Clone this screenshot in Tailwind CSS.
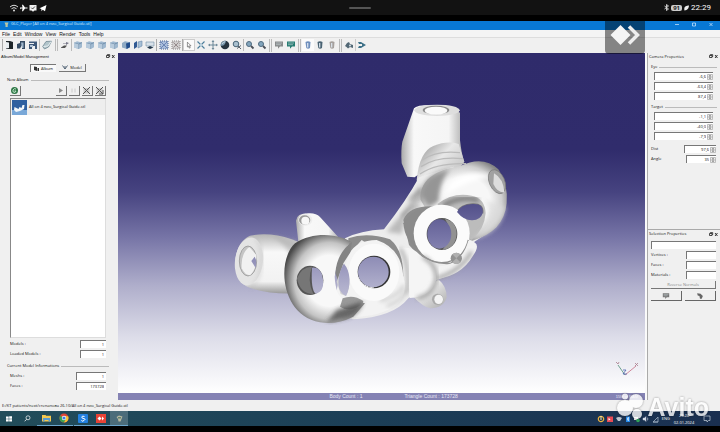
<!DOCTYPE html>
<html lang="en">
<head>
    <meta charset="UTF-8">
    <meta name="viewport" content="width=device-width, initial-scale=1.0">
    <title>GLC_Player [All on 4 нио_Surgical Guide.stl]</title>
    <script src="https://cdn.jsdelivr.net/npm/@tailwindcss/browser@4"></script>
</head>
<body class="bg-black h-screen flex flex-col overflow-hidden font-['Open_Sans',sans-serif] text-[4px] leading-[6px] text-[#111]">
    <!-- Shared icons -->
    <svg class="hidden">
        <symbol id="cube" viewBox="0 0 10 10"><path d="M1 3 4 1.300 9 2.500v4.700L6 9 1 7.500z" fill="#9fb8cf"/><path d="M1 3l4.500 1.200L9 2.500M5.500 4.200V9" stroke="#5b7c9c" stroke-width=".7" fill="none"/><path d="M1 3l4.500 1.200V9L1 7.500z" fill="#b8cbdc"/></symbol>
        <symbol id="lens" viewBox="0 0 10 10"><circle cx="4" cy="4" r="2.500" fill="#83a5bd" stroke="#506b80"/><path d="M6 6l2.500 2.500" stroke="#4c5058" stroke-width="1.800"/></symbol>
        <symbol id="screen" viewBox="0 0 10 10"><path d="M1 1.500h8v5H6L4 8.800V6.500H1z" fill="currentColor"/><path d="M2 3h6M2 4.700h5" stroke="#c9d5d8" stroke-width=".6"/></symbol>
        <symbol id="cup" viewBox="0 0 10 10"><path d="M2.500 2Q5 .5 7.500 2L7 8Q5 9.500 3.300 8z" fill="currentColor"/><path d="M4.700 3v4.500" stroke="#dde7f2" stroke-width="1.200"/></symbol>
        <symbol id="win" viewBox="0 0 10 5"><path d="M1.500 1.500h2.500v2H1.500zM2.300 1.300V.6h2.400v2H4" fill="none" stroke="#222" stroke-width=".8"/><path d="M7 1l2.500 3M9.500 1 7 4" stroke="#222" stroke-width=".9"/></symbol>
        <symbol id="spin" viewBox="0 0 6 6"><path d="M.5.500h5v5h-5zM.5 3h5" fill="#eee" stroke="#888" stroke-width=".5"/><path d="M3 1l1 1.300H2zM3 5l1-1.300H2z" fill="#333"/></symbol>
    </svg>

    <!-- Phone status bar -->
    <header class="relative h-[15px] shrink-0 bg-[#121212] text-white flex items-center px-[9px]">
        <svg class="w-[38px] h-[8px]" viewBox="0 0 38 8">
            <path d="M1 3Q5-.500 9 3M2.500 4.700Q5 2.500 7.500 4.700" fill="none" stroke="#ddd"/><circle cx="5" cy="6.500" r="1" fill="#ddd"/>
            <path d="M11 3.500h2.500L13 .8h1l2 2.700h2.500v1H16L14 7.200h-1l.5-2.700H11.700L11 5.500z" fill="#fff"/>
            <path d="M20.500 1h7v5.500h-2l-1.500 1.200-1.500-1.200h-2z" fill="#eee"/><path d="M22.300 3.700l1.300 1.300 2.300-2.500" fill="none" stroke="#222" stroke-width=".8"/>
            <path d="M30.500 4.200 37.500 1 36 7.200l-2.300-1.400-1.200 1.400-.2-2.200z" fill="#fff"/>
        </svg>
        <span class="absolute left-1/2 -translate-x-1/2 top-[7px] w-[22px] h-[2px] rounded-full bg-[#555]"></span>
        <div class="ml-auto flex items-center gap-[2px] leading-[8px]">
            <svg class="w-[5px] h-[7px]" viewBox="0 0 5 7"><path d="M.5 2l4 3-2 1.500v-6l2 1.500-4 3" fill="none" stroke="#ddd" stroke-width=".9"/></svg>
            <span class="w-[11px] h-[6px] leading-[6px] rounded-[2px] bg-[#ccc] text-[#222] text-[6px] font-bold text-center">91</span>
            <svg class="w-[5px] h-[6px]" viewBox="0 0 5 6"><path d="M.5 5.500C-.5 1.500 2 .8 5 .6 4.500 4 3.500 5 .5 5.500z" fill="#eee"/></svg>
            <span class="text-[8px] font-['Roboto']">22:29</span>
        </div>
    </header>

    <div class="relative flex-1 min-h-0 mt-[6px] flex flex-col bg-[#f0f0f0]">
        <!-- Title bar -->
        <div class="h-[9px] shrink-0 bg-[#0878d4] flex items-center text-[#d5ebfb] pb-[3px]">
            <svg class="w-[5px] h-[5px] ml-[4px] mr-[2px]" viewBox="0 0 5 5"><path d="M.5.500h4L3.700 3v2H1.500V3z" fill="#b8c7a5"/></svg>
            <h1>GLC_Player [All on 4 нио_Surgical Guide.stl]</h1>
            <div class="ml-auto flex gap-[11px] mr-[6px]">
                <button aria-label="Minimize" class="w-[6px] h-[5px]"><svg viewBox="0 0 6 5"><path d="M1 2.500h4" stroke="#d7ecff" stroke-width=".7"/></svg></button>
                <button aria-label="Maximize" class="w-[6px] h-[5px]"><svg viewBox="0 0 6 5"><path d="M1.500 1h3v3h-3z" fill="none" stroke="#d7ecff" stroke-width=".7"/></svg></button>
                <button aria-label="Close" class="w-[6px] h-[5px]"><svg viewBox="0 0 6 5"><path d="M1.500 1l3 3m0-3-3 3" stroke="#d7ecff" stroke-width=".7"/></svg></button>
            </div>
        </div>

        <!-- Menu -->
        <nav class="h-[7px] shrink-0 bg-[#f4f4f4] flex items-center gap-[3px] pl-[2px] text-[5px] font-['Liberation_Sans']">
            <button>File</button><button>Edit</button><button>Window</button><button>View</button><button>Render</button><button>Tools</button><button>Help</button>
        </nav>

        <!-- Toolbar -->
        <div class="h-[16px] shrink-0 border-t border-[#ddd] flex items-center pl-[2px] pb-px *:shrink-0 [&_button]:w-[12px] [&_button]:h-[12px] [&_button]:p-px [&_svg]:w-[10px] [&_svg]:h-[10px]">
            <div class="flex border-l border-[#aaa]">
                <button aria-label="New"><svg viewBox="0 0 10 10"><path d="M2 1h4l3 1v7H2z" fill="#1f2529"/><path d="M2 2l3 .5V8L2 8.500z" fill="#e9eef2"/></svg></button>
                <button aria-label="Open"><svg viewBox="0 0 10 10"><path d="M1 8.500V4l3-1V1h5v8H6V5L4 8.500z" fill="#364b63"/><path d="M5 2.500h2.500V8H6z" fill="#9eb5cb"/></svg></button>
                <button aria-label="Save"><svg viewBox="0 0 10 10"><path d="M1 1.500h8V9H7V6H4v3H1V4h5V3H1z" fill="#3f597a"/><path d="M2 5h3v2H2z" fill="#b6c8da"/></svg></button>
            </div>
            <div class="flex border-l border-[#bbb] pl-px">
                <button aria-label="Close album"><svg viewBox="0 0 10 10"><path d="M.7 6.500 4 1.500l5.500-.3L6.500 7 2.500 9z" fill="#b2c5cb" stroke="#66808b" stroke-width=".7"/><path d="M1.500 6.500 6 6l3-4.500" stroke="#e6eef0" fill="none"/></svg></button>
            </div>
            <div class="flex border-x border-[#bbb] ml-[2px] pl-px h-[12px] w-[3px]"></div>
            <div class="flex pl-px"><button aria-label="Reframe"><svg viewBox="0 0 10 10"><path d="M1 7.500l3-2h3L5 8H1z" fill="#555"/><path d="M3 3.500h3V2l3 1-3 2V4H3" fill="#778"/></svg></button></div>
            <div class="flex border-l border-[#bbb]">
                <button aria-label="Isometric"><svg><use href="#cube"/></svg></button><button aria-label="Front"><svg><use href="#cube"/></svg></button><button aria-label="Right"><svg><use href="#cube"/></svg></button><button aria-label="Top"><svg><use href="#cube"/></svg></button>
                <button aria-label="Left"><svg viewBox="0 0 10 10"><path d="M1 3 4 1.300l5 1v5L6 9 1 7.500z" fill="#90abc4"/><path d="M5 3.500 9 2.300v5L5.500 9z" fill="#234e8c"/></svg></button>
                <button aria-label="Back"><svg viewBox="0 0 10 10"><path d="M1 3l3-2v6L1 9z" fill="#315a93"/><path d="M5 2l4-1v5L5 8z" fill="#a6bfd6" stroke="#6888a8" stroke-width=".6"/></svg></button>
                <button aria-label="Bottom"><svg viewBox="0 0 10 10"><path d="M1 2h8v4H1z" fill="#d8e1e9" stroke="#7590a8" stroke-width=".6"/><path d="M2 7.500 5 6l3.500 1.500L5 9z" fill="#24394d"/></svg></button>
            </div>
            <div class="flex border-x border-[#aaa] pl-px">
                <button aria-label="Select all"><svg viewBox="0 0 10 10"><path d="M1 1h8v8H1z" fill="#a9bddb" stroke="#4a6292" stroke-width="1" stroke-dasharray="1 1"/><path d="M2.500 2.500l5 5m0-5-5 5" stroke="#345291" stroke-dasharray="1 .6"/></svg></button>
                <button aria-label="Unselect all"><svg viewBox="0 0 10 10"><path d="M1 1h8v8H1z" fill="#d0cdcd" stroke="#8d8787" stroke-width="1" stroke-dasharray="1 1"/><path d="M2.500 2.500l5 5m0-5-5 5" stroke="#958b8b"/></svg></button>
            </div>
            <div class="flex border-r border-[#bbb]">
                <button aria-label="Select" class="bg-[#fbfbfb] border border-[#ccc] flex items-center justify-center"><svg viewBox="0 0 10 10"><path d="M3 1.500l4.500 4.500H5.500l1 2.500-1.200.4-1-2.500L3 7.500z" fill="#fff" stroke="#444" stroke-width=".7"/></svg></button>
                <button aria-label="Zoom extents"><svg viewBox="0 0 10 10"><path d="M1.500 1.500l7 7m0-7-7 7" stroke="#4b7d9b" stroke-width="1.100"/><path d="M4 4h2v2H4z" fill="#b8d1df"/></svg></button>
                <button aria-label="Pan"><svg viewBox="0 0 10 10"><path d="M5 .7v8.600M.7 5h8.600M4 2l1-1.300L6 2M4 8l1 1.300L6 8M2 4 .7 5 2 6M8 4l1.300 1L8 6" fill="none" stroke="#617f91" stroke-width=".9"/></svg></button>
                <button aria-label="Orbit"><svg viewBox="0 0 10 10"><circle cx="5" cy="5" r="4.300" fill="#26343f"/><path d="M5 .7a4.300 4.300 0 0 0-4.200 5Q5 6.500 6 1z" fill="#7998ad"/><path d="M2 4q1-2 3-2.200" stroke="#cad8e0" fill="none"/></svg></button>
                <button aria-label="Zoom"><svg viewBox="0 0 10 10"><circle cx="4" cy="4" r="2.800" fill="#a9c0cf" stroke="#496679"/><path d="M6 6l3 3M5 8.500l4-3" stroke="#56616b"/></svg></button>
            </div>
            <div class="flex"><button aria-label="Zoom in"><svg><use href="#lens"/></svg></button><button aria-label="Zoom out"><svg><use href="#lens"/></svg></button></div>
            <div class="w-[3px] h-[13px] border-x border-[#bbb] mx-px"></div>
            <div class="flex"><button aria-label="Hide" class="text-[#87898a]"><svg><use href="#screen"/></svg></button><button aria-label="Show" class="text-[#257c72]"><svg><use href="#screen"/></svg></button></div>
            <div class="w-[3px] h-[13px] border-x border-[#bbb] mx-px"></div>
            <div class="flex"><button aria-label="Shaded" class="bg-[#fbfbfb] text-[#6f8fbd]"><svg><use href="#cup"/></svg></button><button aria-label="Wireframe" class="text-[#4a6373]"><svg><use href="#cup"/></svg></button><button aria-label="Points" class="text-[#a5a09d]"><svg><use href="#cup"/></svg></button></div>
            <div class="w-[3px] h-[13px] border-x border-[#bbb] mx-px"></div>
            <div class="flex"><button aria-label="Snapshot"><svg viewBox="0 0 10 10"><path d="M1 6l2-3 2-1 1 2 3 1v3L6 7 4 8.500 2.500 7z" fill="#536875"/><circle cx="6" cy="5.500" r="1" fill="#d4e0e6"/></svg></button></div>
            <div class="flex border-l border-[#ccc]"><button aria-label="Section"><svg viewBox="0 0 10 10"><path d="M1 2h3l5 3-5 3H1l1-2h3V4H2z" fill="#3d7188"/></svg></button></div>
        </div>

        <div class="flex-1 min-h-0 flex">
            <!-- Album panel -->
            <aside class="w-[118px] shrink-0 flex flex-col pb-[6px]">
                <div class="flex justify-between items-center h-[7px] pr-[3px] pl-px"><h2 class="font-['Liberation_Sans']">Album/Model Management</h2><svg class="w-[10px] h-[5px]"><use href="#win"/></svg></div>
                <div class="flex gap-[3px] pl-[30px] pt-[4px]">
                    <button class="w-[26px] h-[8px] flex items-center justify-center gap-[2px] bg-[#f9f9f9] border-t border-l border-[#777]"><svg class="w-[5px] h-[5px]" viewBox="0 0 5 5"><path d="M0 .5l3 .5v4L0 4zM3.500 2H5v3H3.500z" fill="#333"/></svg>Album</button>
                    <button class="w-[27px] h-[8px] flex items-center justify-center gap-[2px] border-b border-r border-[#777]"><svg class="w-[6px] h-[5px]" viewBox="0 0 6 5"><path d="M.5.500 3 4l2.500-3.500M3 4V1" stroke="#567" fill="none"/></svg>Model</button>
                </div>
                <div class="flex items-center gap-[2px] pl-[7px] pr-[9px] pt-[5px]"><h3>New Album</h3><span class="flex-1 h-px bg-[#bbb]"></span></div>
                <div class="flex gap-[2px] pl-[10px] pr-[12px] pt-[3px] pb-[2px] [&_button]:w-[11px] [&_button]:h-[10px] [&_button]:border-b [&_button]:border-r [&_button]:border-[#777] [&_svg]:w-[9px] [&_svg]:h-[9px]">
                    <button aria-label="Add" class="mr-auto"><svg viewBox="0 0 9 9"><circle cx="4.500" cy="4.500" r="3.500" fill="#2f7646"/><path d="M6 3Q4 1.800 3 4t2 2.500L6 5H4.500" fill="none" stroke="#c8eed2" stroke-width=".9"/></svg></button>
                    <button aria-label="Play"><svg viewBox="0 0 9 9"><path d="M3 2l4 2.500L3 7z" fill="#8a8a8a"/></svg></button>
                    <button aria-label="Stop"><svg viewBox="0 0 9 9"><path d="M3 2.500v4m3-4v4" stroke="#ccc"/></svg></button>
                    <button aria-label="Remove"><svg viewBox="0 0 9 9"><path d="M1.500 2h6v5.500h-6z" fill="#ccc"/><path d="M1 1l7 7m0-7L1 8" stroke="#555"/></svg></button>
                    <button aria-label="Clear"><svg viewBox="0 0 9 9"><path d="M1.500 2h6v5.500h-6z" fill="#ccc"/><path d="M1 1l7 7m0-7L1 8M8 4v4H4" fill="none" stroke="#555"/></svg></button>
                </div>
                <ul class="flex-1 ml-[10px] mr-[12px] bg-white border border-[#888] border-b-[#ddd] border-r-[#ddd]">
                    <li class="flex items-center gap-[2px] bg-[#eee] h-[16px] pl-px">
                        <svg class="w-[15px] h-[15px]" viewBox="0 0 15 15"><path d="M0 0h15v15H0z" fill="#2f5f9f"/><path d="M0 10h15v5H0z" fill="#79a8d8"/><path d="M2 10l.5-3 2 1 2 1 1-2 2 1 1-3h2l-.5 4-4 2-4 1z" fill="#f2f6fa"/></svg>
                        <span class="whitespace-nowrap">All on 4 нио_Surgical Guide.stl</span>
                    </li>
                </ul>
                <div class="pl-[10px] pr-[12px] pt-[2px] flex flex-col gap-[2px]">
                    <div class="flex justify-between items-center"><label for="models">Models :</label><input id="models" value="1" readonly class="w-[26px] h-[8px] bg-white border-t border-l border-[#777] text-right pr-[2px]"></div>
                    <div class="flex justify-between items-center"><label for="loaded">Loaded Models :</label><input id="loaded" value="1" readonly class="w-[26px] h-[8px] bg-white border-t border-l border-[#777] text-right pr-[2px]"></div>
                </div>
                <div class="flex items-center gap-[2px] pl-[7px] pr-[9px] pt-[5px] pb-[3px]"><h3 class="whitespace-nowrap">Current Model Informations</h3><span class="flex-1 h-px bg-[#bbb]"></span></div>
                <div class="pl-[10px] pr-[12px] pb-[4px] flex flex-col gap-[2px]">
                    <div class="flex justify-between items-center"><label for="meshs">Meshs :</label><input id="meshs" value="1" readonly class="w-[30px] h-[8px] bg-white border-t border-l border-[#777] text-right pr-[2px]"></div>
                    <div class="flex justify-between items-center"><label for="faces">Faces :</label><input id="faces" value="173728" readonly class="w-[30px] h-[8px] bg-white border-t border-l border-[#777] text-right pr-[2px]"></div>
                </div>
            </aside>

            <!-- 3D view -->
            <main class="flex-1 min-w-0 flex flex-col bg-[linear-gradient(to_bottom,#2f2b6b_0%,#302c6c_28%,#464380_40%,#7674a6_53%,#afaecb_67%,#dddde9_82%,#ffffff_98%)]">
                <svg class="w-full flex-1 min-h-0" viewBox="0 0 527 340">
                    <defs>
                        <radialGradient id="ball" cx=".5" cy=".5" r=".55"><stop offset=".55" stop-color="#f7f7f7"/><stop offset=".8" stop-color="#d0d0d0"/><stop offset="1" stop-color="#858585"/></radialGradient>
                        <radialGradient id="dark" cx=".56" cy=".52" r=".58"><stop offset=".5" stop-color="#f8f8f8"/><stop offset=".75" stop-color="#c4c4c4"/><stop offset="1" stop-color="#4a4a4a"/></radialGradient>
                        <linearGradient id="tube"><stop offset="0" stop-color="#aaa"/><stop offset=".2" stop-color="#f8f8f8"/><stop offset=".75" stop-color="#f5f5f5"/><stop offset="1" stop-color="#aaa"/></linearGradient>
                        <linearGradient id="neck" x1="0" y1="0" x2="1" y2="1"><stop offset="0" stop-color="#888"/><stop offset=".4" stop-color="#e8e8e8"/><stop offset="1" stop-color="#aaa"/></linearGradient>
                        <linearGradient id="arm" x1="0" y1="0" x2="0" y2="1"><stop offset="0" stop-color="#b5b5b5"/><stop offset=".3" stop-color="#f8f8f8"/><stop offset=".8" stop-color="#f2f2f2"/><stop offset="1" stop-color="#999"/></linearGradient>
                        <filter id="soft"><feGaussianBlur stdDeviation="6"/></filter>
                        <mask id="holes" maskUnits="userSpaceOnUse" x="0" y="0" width="900" height="750">
                            <path d="M0 0h900v750H0z" fill="#fff"/>
                            <ellipse cx="658" cy="432" rx="36" ry="44"/>
                            <ellipse cx="460" cy="546" rx="46" ry="46"/>
                            <path d="M276 533Q305 530 309 568T287 611Q272 600 276 533z"/>
                            <path d="M372 521C393 545 393 590 378 618Q362 610 357 594C353 572 357 543 372 521z"/>
                            <path d="M711 366Q722 344 757 342T788 370Q782 390 757 391T711 366z"/>
                            <path d="M94 513L104 500Q112 512 107 534z"/>
                        </mask>
                    </defs>
                    <g transform="translate(102 37) scale(.33333)">
                        <g mask="url(#holes)">
                            <!-- tower -->
                            <path d="M582 55Q590 43 650 45T720 70L720 150Q724 190 733 216L600 250 584 262 562 260 545 220Q542 180 547 155z" fill="url(#tube)"/>
                            <ellipse cx="651" cy="61" rx="68" ry="17" fill="#dedede"/><ellipse cx="648" cy="60" rx="40" ry="13" fill="#888"/><ellipse cx="648" cy="62" rx="34" ry="12" fill="#fafafa"/>
                            <path d="M590 270Q598 185 640 168T716 162L733 215 700 260 600 310z" fill="url(#neck)"/>
                            <path d="M607 210Q650 180 720 188M603 230Q650 198 728 206M600 252Q650 218 738 221" fill="none" stroke="#bbb" stroke-width="4"/>
                            <!-- left arm -->
                            <path d="M90 437Q150 425 215 448L245 460 220 610Q140 612 85 592C35 570 30 465 90 437z" fill="url(#arm)"/>
                            <path d="M150 435Q210 470 222 520L235 455z" fill="#aaa" filter="url(#soft)" opacity=".6"/>
                            <ellipse cx="87" cy="514" rx="42" ry="72" fill="#e4e4e4" transform="rotate(7 87 514)"/>
                            <path d="M105 443Q139 480 117 560 105 590 90 590" fill="none" stroke="#aaa" stroke-width="3" filter="url(#soft)"/>
                            <ellipse cx="84" cy="513" rx="26" ry="45" fill="#c5c5c5" stroke="#8c8c8c" stroke-width="2"/>
                            <path d="M88 471Q62 490 65 535 75 556 90 556 112 535 109 495z" fill="#f1f1f1"/>
                            <!-- small pegs -->
                            <path d="M228 392Q230 370 265 370 287 368 300 381L358 445 235 455z" fill="url(#tube)"/>
                            <ellipse cx="256" cy="389" rx="21" ry="18" fill="#ededed"/><ellipse cx="254" cy="390" rx="17" ry="14" fill="#999"/><ellipse cx="256" cy="392" rx="12" ry="12" fill="#f7f7f7"/>
                            <path d="M580 620L655 568Q681 590 680 622 670 655 631 655 608 650 580 620z" fill="url(#neck)"/>
                            <ellipse cx="653" cy="628" rx="17" ry="17" fill="#aaa"/><ellipse cx="656" cy="628" rx="13" ry="14" fill="#f4f4f4"/>
                            <!-- arch -->
                            <path d="M597 262Q560 330 492 418 420 422 375 445L340 670 400 688Q520 682 565 625L650 570Q730 545 757 460L830 410 700 230z" fill="#ededed"/>
                            <path d="M600 280Q570 350 500 425L545 432Q560 350 610 330z" fill="#bbb" filter="url(#soft)"/>
                            <path d="M568 330Q590 310 604 300M545 380Q570 350 600 348" fill="none" stroke="#777" stroke-width="5" filter="url(#soft)"/>
                            <!-- right bulb -->
                            <path d="M602 330C595 260 670 235 720 228Q790 195 835 238 865 280 860 340 852 425 757 452L650 410z" fill="url(#ball)"/>
                            <path d="M601 315Q610 250 690 239 660 265 656 335L625 350z" fill="#959595" filter="url(#soft)"/>
                            <path d="M690 280Q750 230 830 265 770 255 675 315z" fill="#fff" filter="url(#soft)"/>
                            <path d="M652 342Q700 305 755 317 795 325 797 370 793 420 755 449L700 420z" fill="#bcbcbc"/>
                            <path d="M670 347Q725 315 775 331" fill="none" stroke="#777" stroke-width="12" filter="url(#soft)"/>
                            <path d="M795 330Q822 370 790 420L760 448Q845 430 858 350z" fill="#ddd" opacity=".7" filter="url(#soft)"/>
                            <path d="M711 366Q722 344 757 342T788 370" fill="none" stroke="#777" stroke-width="4"/>
                            <ellipse cx="831" cy="275" rx="23" ry="38" fill="#a1a1a1" stroke="#777" stroke-width="2" transform="rotate(-24 831 275)"/><path d="M822 250Q850 265 853 307 833 309 820 282z" fill="#ddd"/>
                            <!-- right sleeve -->
                            <path d="M550 390Q565 350 630 349L700 355 745 450Q740 500 680 520 610 520 567 465z" fill="#8d8d8d"/>
                            <path d="M550 400Q580 350 640 350L595 475Q555 455 550 400z" fill="#8b8b8b"/>
                            <ellipse cx="665" cy="430" rx="84" ry="86" fill="#fbfbfb"/>
                            <path d="M588 480Q630 525 692 520 735 495 745 450" fill="none" stroke="#909090" stroke-width="4"/>
                            <ellipse cx="666" cy="432" rx="46" ry="48" fill="#555"/><path d="M675 387Q710 395 710 432 707 475 667 480 705 435 675 387z" fill="#929292"/>
                            <path d="M745 452Q790 455 757 500 725 555 650 568L655 530Q725 525 745 452z" fill="#f2f2f2"/>
                            <path d="M650 565Q720 545 755 485" stroke="#999" stroke-width="9" fill="none" filter="url(#soft)"/>
                            <circle cx="709" cy="505" r="17" fill="#929292"/><path d="M709 505l-12-12a17 17 0 0 1 24 0zM709 505l12 12a17 17 0 0 1-24 0z" fill="#b0b0b0"/>
                            <!-- middle bulge -->
                            <path d="M535 475Q575 465 605 500 650 520 648 570 635 620 570 624L545 580z" fill="#f5f5f5"/>
                            <path d="M608 500Q652 525 648 570 635 618 590 625" fill="none" stroke="#999" stroke-width="9" filter="url(#soft)"/>
                            <path d="M540 475Q570 520 562 610" fill="none" stroke="#aaa" stroke-width="10" filter="url(#soft)"/>
                            <!-- middle sleeve -->
                            <path d="M385 445Q440 425 510 448 550 480 550 560L530 520 425 450 385 495z" fill="#8c8c8c"/>
                            <path d="M387 492Q410 450 470 450 545 475 550 560 565 610 530 645 470 685 380 680L350 600z" fill="#f3f3f3"/>
                            <path d="M480 632Q535 620 552 585M500 648Q545 635 560 600" fill="none" stroke="#aaa" stroke-width="5" filter="url(#soft)"/>
                            <ellipse cx="462" cy="547" rx="76" ry="86" fill="#fafafa"/><ellipse cx="462" cy="546" rx="49" ry="49" fill="#333"/><path d="M413 560Q427 592 462 594" fill="none" stroke="#eee" stroke-width="3"/>
                            <!-- left ball with crescent -->
                            <path d="M391 455Q350 510 344 560 347 615 370 628L435 640 400 680Q350 705 300 697C180 675 170 510 225 460 285 420 370 435 398 460z" fill="url(#dark)"/>
                            <path d="M396 455Q350 490 346 550L357 580 370 520 391 487z" fill="#848484"/>
                            <path d="M370 521C393 545 393 590 378 618L362 612 350 575z" fill="#d2d2d2"/>
                            <path d="M368 625Q400 612 430 633L428 642Q390 670 360 650z" fill="#999"/>
                            <path d="M428 635Q420 675 370 687L320 697 350 660z" fill="#444" filter="url(#soft)" opacity=".75"/>
                            <ellipse cx="270" cy="571" rx="40" ry="44" fill="#555"/><path d="M231 565Q245 530 276 530 260 570 280 612 240 612 231 565z" fill="#767676"/>
                        </g>
                    </g>
                    <g fill="none" stroke-width=".8"><path d="M507 322l-7-10" stroke="#4c8b74"/><path d="M507 322l11-9" stroke="#c56d83"/><path d="M505 317h3l-3 4h4" stroke="#4c62ae"/><path d="M498 309l2 2 1-2M517 310l3 3m0-3-3 3" stroke="#a87c8b"/></g>
                </svg>
                <div class="h-[7px] shrink-0 bg-[#8583b4] text-[#e8e8f5] text-[5px] font-['Liberation_Sans'] grid grid-cols-[2fr_75px_2fr_auto] items-center leading-[7px] pr-[7px]">
                    <span></span><span>Body Count : 1</span><span>Triangle Count : 173728</span><span class="text-[4px]">15M of RAM</span>
                </div>
            </main>

            <!-- Properties -->
            <aside class="w-[75px] shrink-0 border-l-2 border-[#fafafa] flex flex-col">
                <section class="h-[176px] pl-px border-l border-[#aaa]">
                    <div class="flex justify-between items-center h-[7px] pr-[2px]"><h2>Camera Properties</h2><svg class="w-[10px] h-[5px]"><use href="#win"/></svg></div>
                    <div class="flex items-center gap-[2px] pl-[2px] pr-[3px] pt-[4px] pb-[2px]"><h3>Eye</h3><span class="flex-1 h-px bg-[#bbb]"></span></div>
                    <div class="pl-[5px] pr-[7px] flex flex-col gap-[2px]">
                        <div class="flex items-center h-[8px] bg-white border-t border-l border-[#777]"><input aria-label="Eye X" value="-6,6" class="min-w-0 flex-1 text-right pr-px"><svg class="w-[6px] h-[6px]"><use href="#spin"/></svg></div>
                        <div class="flex items-center h-[8px] bg-white border-t border-l border-[#777]"><input aria-label="Eye Y" value="-63,4" class="min-w-0 flex-1 text-right pr-px"><svg class="w-[6px] h-[6px]"><use href="#spin"/></svg></div>
                        <div class="flex items-center h-[8px] bg-white border-t border-l border-[#777]"><input aria-label="Eye Z" value="87,4" class="min-w-0 flex-1 text-right pr-px"><svg class="w-[6px] h-[6px]"><use href="#spin"/></svg></div>
                    </div>
                    <div class="flex items-center gap-[2px] pl-[2px] pr-[3px] pt-[4px] pb-[2px]"><h3>Target</h3><span class="flex-1 h-px bg-[#bbb]"></span></div>
                    <div class="pl-[5px] pr-[7px] flex flex-col gap-[2px]">
                        <div class="flex items-center h-[8px] bg-white border-t border-l border-[#777]"><input aria-label="Target X" value="-1,1" class="min-w-0 flex-1 text-right pr-px"><svg class="w-[6px] h-[6px]"><use href="#spin"/></svg></div>
                        <div class="flex items-center h-[8px] bg-white border-t border-l border-[#777]"><input aria-label="Target Y" value="-40,0" class="min-w-0 flex-1 text-right pr-px"><svg class="w-[6px] h-[6px]"><use href="#spin"/></svg></div>
                        <div class="flex items-center h-[8px] bg-white border-t border-l border-[#777]"><input aria-label="Target Z" value="-7,9" class="min-w-0 flex-1 text-right pr-px"><svg class="w-[6px] h-[6px]"><use href="#spin"/></svg></div>
                    </div>
                    <div class="pl-[2px] pr-[4px] pt-[5px] flex flex-col gap-[2px]">
                        <div class="flex items-center justify-between"><label for="dist">Dist</label><div class="w-[32px] flex items-center h-[8px] bg-white border-t border-l border-[#777]"><input id="dist" value="97,6" class="min-w-0 flex-1 text-right pr-px"><svg class="w-[6px] h-[6px]"><use href="#spin"/></svg></div></div>
                        <div class="flex items-center justify-between"><label for="angle">Angle</label><div class="w-[30px] flex items-center h-[8px] bg-white border-t border-l border-[#777]"><input id="angle" value="35" class="min-w-0 flex-1 text-right pr-px"><svg class="w-[6px] h-[6px]"><use href="#spin"/></svg></div></div>
                    </div>
                </section>
                <section class="flex-1 pl-px border-l border-t border-[#aaa]">
                    <div class="flex justify-between items-center h-[8px] pr-[2px]"><h2>Selection Properties</h2><svg class="w-[10px] h-[5px]"><use href="#win"/></svg></div>
                    <div class="pl-[2px] pr-[4px] pt-[3px] flex flex-col gap-[2px]">
                        <input aria-label="Name" class="w-full h-[8px] bg-white border-t border-l border-[#777]">
                        <div class="flex items-center justify-between"><label for="vertices">Vertices :</label><input id="vertices" class="w-[30px] h-[8px] bg-white border-t border-l border-[#777]"></div>
                        <div class="flex items-center justify-between"><label for="selFaces">Faces :</label><input id="selFaces" class="w-[30px] h-[8px] bg-white border-t border-l border-[#777]"></div>
                        <div class="flex items-center justify-between"><label for="materials">Materials :</label><input id="materials" class="w-[30px] h-[8px] bg-white border-t border-l border-[#777]"></div>
                        <button class="h-[8px] border-b border-r border-[#777] text-[#888]">Reverse Normals</button>
                        <div class="grid grid-cols-2 gap-[3px] text-[#777]">
                            <button aria-label="Visibility" class="h-[10px] border-b border-r border-[#666] flex items-center justify-center"><svg class="w-[8px] h-[8px]"><use href="#screen"/></svg></button>
                            <button aria-label="Material" class="h-[10px] border-b border-r border-[#666] flex items-center justify-center"><svg class="w-[8px] h-[8px]" viewBox="0 0 7 7"><path d="M1 1l3 .5 2 2-1 2.500L3.500 6 3 3.500 1.500 3z" fill="#666"/></svg></button>
                        </div>
                    </div>
                </section>
            </aside>
        </div>

        <!-- Application status -->
        <div class="h-[11px] shrink-0 flex items-center pl-[2px]">E:/KT patients/next/степанова 26.10/All on 4 нио_Surgical Guide.stl</div>

        <!-- AnyDesk tab -->
        <div class="absolute top-0 right-[75px] w-[40px] h-[33px] rounded-b-[4px] bg-black/45">
            <svg viewBox="0 0 40 33"><path d="M15.500 4 25.500 14l-10 10-10-10z" fill="#f5f5f5"/><path d="M24 5.500 32.500 14 24 22.500" fill="none" stroke="#eee" stroke-width="3.500"/></svg>
        </div>
    </div>

    <!-- Taskbar -->
    <footer class="relative h-[15px] shrink-0 mb-[6px] flex items-center bg-linear-to-r from-[#224d5a] via-[#1c3f57] to-[#1a2f50] text-white [&_button]:w-[18px] [&_button]:h-[15px] [&_button]:flex [&_button]:items-center [&_button]:justify-center">
        <button aria-label="Start"><svg class="w-[6px] h-[6px]" viewBox="0 0 6 6"><path d="M0 .5h2.700v2.200H0zM3.200.3H6v2.400H3.200zM0 3.200h2.700v2.200H0zM3.200 3.200H6v2.400H3.200z" fill="#fff"/></svg></button>
        <button aria-label="Search"><svg class="w-[7px] h-[7px]" viewBox="0 0 7 7"><circle cx="4" cy="2.800" r="2" fill="none" stroke="#fff" stroke-width=".7"/><path d="M2.600 4.300.6 6.300" stroke="#fff" stroke-width=".8"/></svg></button>
        <div class="flex ml-px [&_button]:border-b [&_button]:border-[#6aa5cc]">
            <button aria-label="Explorer"><svg class="w-[9px] h-[8px]" viewBox="0 0 9 8"><path d="M0 1h3.500l.7.800H9V7.500H0z" fill="#f4c84f"/><path d="M1 4h7v3.500H6.500V6h-4v1.500H1z" fill="#5a9bce"/></svg></button>
            <button aria-label="Chrome"><svg class="w-[10px] h-[10px]" viewBox="0 0 10 10"><circle cx="5" cy="5" r="4.500" fill="#e04536"/><path d="M1.100 2.700A4.500 4.500 0 0 0 5 9.500L7 6z" fill="#3aa352"/><path d="M9.100 3.200A4.500 4.500 0 0 1 5 9.500L7 6 5 3.200z" fill="#f5c534"/><circle cx="5" cy="5" r="2.200" fill="#fff"/><circle cx="5" cy="5" r="1.600" fill="#3e7be0"/></svg></button>
        </div>
        <div class="flex ml-px [&_button]:border-b [&_button]:border-[#6aa5cc]">
            <button aria-label="Exocad"><svg class="w-[10px] h-[9px]" viewBox="0 0 10 9"><rect width="10" height="9" rx="1" fill="#2380df"/><path d="M6.500 2.500Q4 1.500 3.800 3T6 4.700 6 6.500t-2.500-.2" fill="none" stroke="#fff"/></svg></button>
            <button aria-label="AnyDesk"><svg class="w-[10px] h-[9px]" viewBox="0 0 10 9"><path d="M0 0h10v9H0z" fill="#e84336"/><path d="M3.500 2.500l2 2-2 2-2-2zM6 2.500l2 2-2 2" fill="#fff"/></svg></button>
            <button aria-label="GLC Player" class="bg-white/20"><svg class="w-[7px] h-[7px]" viewBox="0 0 7 7"><path d="M.5 2 3 .5 6.500 1.500 5.500 4 4.500 6.500h-2L2 4z" fill="#b8b8a0"/><path d="M2 2h3v1.500H2z" fill="#5f8171"/></svg></button>
        </div>
        <div class="ml-auto flex items-center gap-[2px] pr-[4px]">
            <svg class="w-[63px] h-[8px]" viewBox="0 0 63 8">
                <circle cx="4" cy="4" r="2.700" fill="none" stroke="#efb43d" stroke-width="1.200"/><path d="M4 1v4" stroke="#fff1bd"/>
                <path d="M10 1.500h6v5.500h-6z" fill="#e64b55"/><path d="M11.500 3l2 1.300-2 1.300z" fill="#fff"/>
                <path d="M19 3q3-2 6 0l-2 3h-2z" fill="#bdc6ce"/>
                <path d="M29 1.500h4v5.500h-4z" fill="#2488e8"/><path d="M30 3l2 2-1 1V2l1 1-2 2" fill="none" stroke="#fff" stroke-width=".5"/>
                <path d="M37 2h4v3h-4z" fill="#eee"/><circle cx="41" cy="5.500" r="1.800" fill="#30a45a"/>
                <path d="M46 3h1.500L49 1.500v5L47.500 5H46zM50.500 2.500q1 1.500 0 3" fill="#d8e0e8" stroke="#ccd" stroke-width=".4"/>
                <path d="M56 7l5-5v5zM56 7h5" fill="none" stroke="#9eafc1" stroke-width=".8"/>
            </svg>
            <span>ENG</span>
            <div class="text-center leading-[7px] w-[24px]">23:28<br>02.01.2024</div>
            <button aria-label="Notifications"><svg class="w-[8px] h-[8px]" viewBox="0 0 8 8"><path d="M1 1h6v4.500H5.500L4 7V5.500H1z" fill="none" stroke="#dfe7ef" stroke-width=".6"/></svg></button>
        </div>
        <!-- Avito mark -->
        <div class="absolute right-[11px] bottom-[5px] flex items-end gap-[3px] opacity-80 pointer-events-none drop-shadow-[0_0_1px_rgba(0,0,0,0.45)]">
            <svg class="w-[28px] h-[28px]" viewBox="0 0 28 28" fill="#fff"><circle cx="9" cy="15" r="8"/><circle cx="20" cy="8" r="7"/><circle cx="9" cy="3.500" r="3"/><circle cx="21" cy="21" r="5"/></svg>
            <span class="text-[25px] leading-[28px] font-bold text-white font-['Liberation_Sans']">Avito</span>
        </div>
    </footer>
</body>
</html>
